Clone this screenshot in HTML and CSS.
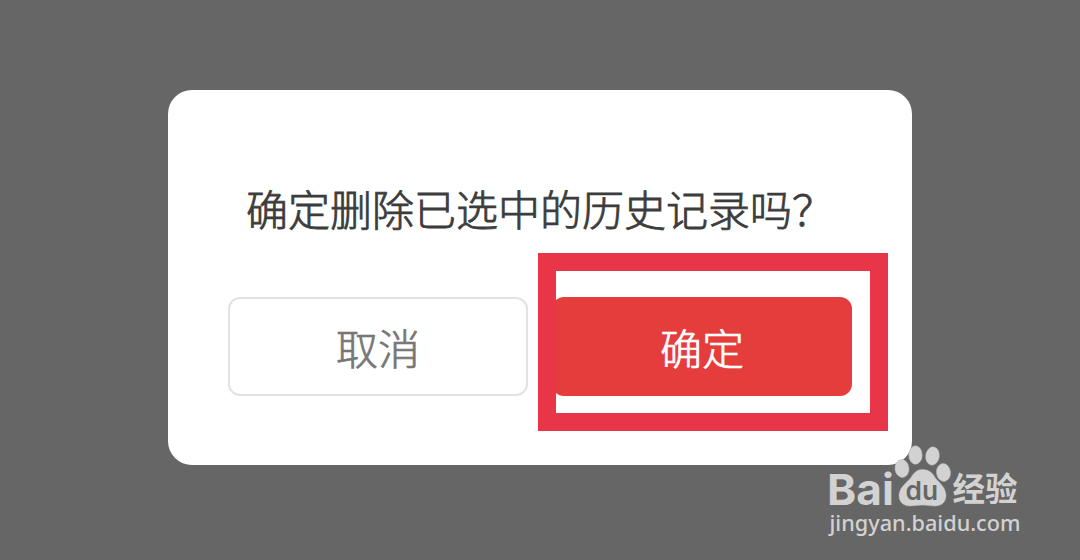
FILE: index.html
```html
<!DOCTYPE html>
<html lang="zh-CN">
	<head>
		<meta charset="utf-8" />
		<title>删除历史记录</title>
		<link rel="stylesheet" href="styles.css">
	</head>
	<body>
		<div class="dialog">
			<p class="message">确定删除已选中的历史记录吗？</p>
			<div class="actions">
				<button class="btn cancel">取消</button>
				<div class="confirm-wrap">
					<button class="btn confirm">确定</button>
					<span class="highlight"></span>
				</div>
			</div>
		</div>

		<svg class="watermark" viewBox="0 0 210 110" width="210" height="110">
			<text class="brand" x="7" y="69.5" textLength="67" lengthAdjust="spacingAndGlyphs">Bai</text>
			<!-- paw -->
			<g class="paw">
				<ellipse cx="82" cy="33.5" rx="7" ry="9" transform="rotate(-6 82 33.5)" />
				<ellipse cx="95.5" cy="20" rx="6.7" ry="9.2" />
				<ellipse cx="112.5" cy="21" rx="6.8" ry="9.2" transform="rotate(8 112.5 21)" />
				<ellipse cx="123.5" cy="37.5" rx="7" ry="9" transform="rotate(-6 123.5 37.5)" />
				<path d="M102.500 34.500c6 0 10 3 12.500 8 4 5 11 10 11 18 0 7-5 10.500-11 10.500-5 0-8-1-12.500-1s-8 1-12.500 1c-6 0-11-3.500-11-10.500 0-8 8-13 12-18 3-5 6-8 11.500-8z" />
			</g>
			<text class="du" x="85.500" y="65" textLength="32.500" lengthAdjust="spacingAndGlyphs">du</text>
			<text class="jingyan" x="132.500" y="66" textLength="65" lengthAdjust="spacingAndGlyphs">经验</text>
			<text class="site" x="9.500" y="95.500" textLength="191" lengthAdjust="spacingAndGlyphs">jingyan.baidu.com</text>
		</svg>
	</body>
</html>
```
FILE: styles.css
```css
* {
	box-sizing: border-box;
}
body {
	margin: 0;
	height: 560px;
	padding-top: 90px;
	background-color: #666;
	font-family: "Noto Sans CJK SC", sans-serif;
	overflow: hidden;
}
.dialog {
	width: 744px;
	height: 375px;
	margin: 0 auto;
	padding: 88px 60px 0;
	background-color: #fff;
	border-radius: 24px;
}
.message {
	margin: 0 0 59px 18px;
	font-size: 42px;
	line-height: 60px;
	font-weight: 300;
	color: #3c3c3c;
	white-space: nowrap;
	-webkit-text-stroke: 0.8px #3c3c3c;
}
.actions {
	display: flex;
	gap: 24px;
}
.btn {
	display: block;
	width: 300px;
	height: 99px;
	padding: 0;
	border: none;
	border-radius: 12px;
	font-family: inherit;
	font-size: 42px;
	font-weight: 300;
	line-height: 60px;
	-webkit-text-stroke: 0.7px currentColor;
}
.cancel {
	border: 2px solid #e2e2e2;
	background-color: #fff;
	color: #777;
}
.confirm-wrap {
	position: relative;
}
.confirm {
	background-color: #e53c3c;
	color: #fff;
}
/* red frame drawn over the confirm button */
.highlight {
	position: absolute;
	left: -14px;
	top: -44px;
	width: 350px;
	height: 178px;
	border: 18px solid #e93548;
}
.watermark {
	position: absolute;
	left: 820px;
	top: 435px;
	fill: #d2d2d2;
}
.brand {
	font-family: Inter, sans-serif;
	font-weight: 700;
	font-size: 43px;
}
.paw {
	stroke: #bdbdbd;
	stroke-width: 0.5;
}
.du {
	font-family: Inter, sans-serif;
	font-weight: 600;
	font-size: 26px;
	fill: #666;
}
.jingyan {
	font-weight: 700;
	font-size: 33px;
}
.site {
	font-family: "Noto Sans", sans-serif;
	font-weight: 500;
	font-size: 22px;
}
```
